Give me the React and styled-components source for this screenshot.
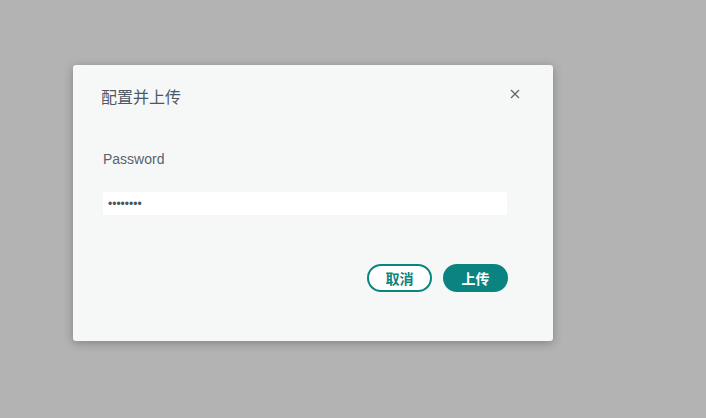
import React from "react";
import styled, { createGlobalStyle } from "styled-components";

const Global = createGlobalStyle`
  html, body { margin: 0; padding: 0; background: #b3b3b3; }
  body { font-family: "Liberation Sans", "Noto Sans CJK SC", sans-serif; }
  #root { min-height: 418px; }
`;

const Page = styled.div`
  min-height: 418px;
  padding: 65px 0 0 73px;
  box-sizing: border-box;
`;

const Dialog = styled.div`
  width: 480px;
  box-sizing: border-box;
  background: #f6f8f8;
  border-radius: 3px;
  box-shadow: 0 2px 10px rgba(0, 0, 0, 0.28);
  padding: 19px 46px 49px 30px;
  display: flex;
  flex-direction: column;
`;

const Header = styled.div`
  display: flex;
  align-items: center;
  justify-content: space-between;
  height: 24px;
`;

const Title = styled.h2`
  margin: 0 0 0 -2px;
  font-family: "Noto Sans CJK SC", sans-serif;
  font-size: 16px;
  font-weight: 400;
  line-height: 24px;
  color: #4e5863;
`;

const Close = styled.button`
  border: none;
  background: none;
  padding: 0;
  margin: -4px -13px 0 0;
  width: 10px;
  height: 10px;
  display: flex;
  cursor: pointer;
`;

const Label = styled.label`
  margin-top: 41px;
  font-size: 14px;
  line-height: 20px;
  color: #5a626a;
`;

const Input = styled.input`
  margin-top: 23px;
  height: 23px;
  box-sizing: border-box;
  border: none;
  border-radius: 2px;
  background: #ffffff;
  padding: 0 5px;
  font-size: 12px;
  color: #4a5560;
  outline: none;
`;

const Footer = styled.div`
  margin-top: 49px;
  display: flex;
  justify-content: flex-end;
  gap: 11px;
  margin-right: -1px;
`;

const Button = styled.button`
  width: 65px;
  height: 28px;
  box-sizing: border-box;
  border-radius: 14px;
  border: 2px solid #0b8481;
  background: ${(p) => (p.$primary ? "#0b8481" : "#ffffff")};
  color: ${(p) => (p.$primary ? "#ffffff" : "#0b8481")};
  font-family: "Noto Sans CJK SC", sans-serif;
  font-weight: 700;
  font-size: 14px;
  line-height: 1;
  padding: 0;
  cursor: pointer;
`;

export default function App() {
  return (
    <>
      <Global />
      <Page>
        <Dialog>
          <Header>
            <Title>配置并上传</Title>
            <Close aria-label="close">
              <svg width="10" height="10" viewBox="0 0 10 10">
                <path d="M1 1L9 9M9 1L1 9" stroke="#5a636b" strokeWidth="1.2" fill="none" />
              </svg>
            </Close>
          </Header>
          <Label>Password</Label>
          <Input type="password" defaultValue="12345678" readOnly />
          <Footer>
            <Button>取消</Button>
            <Button $primary>上传</Button>
          </Footer>
        </Dialog>
      </Page>
    </>
  );
}
